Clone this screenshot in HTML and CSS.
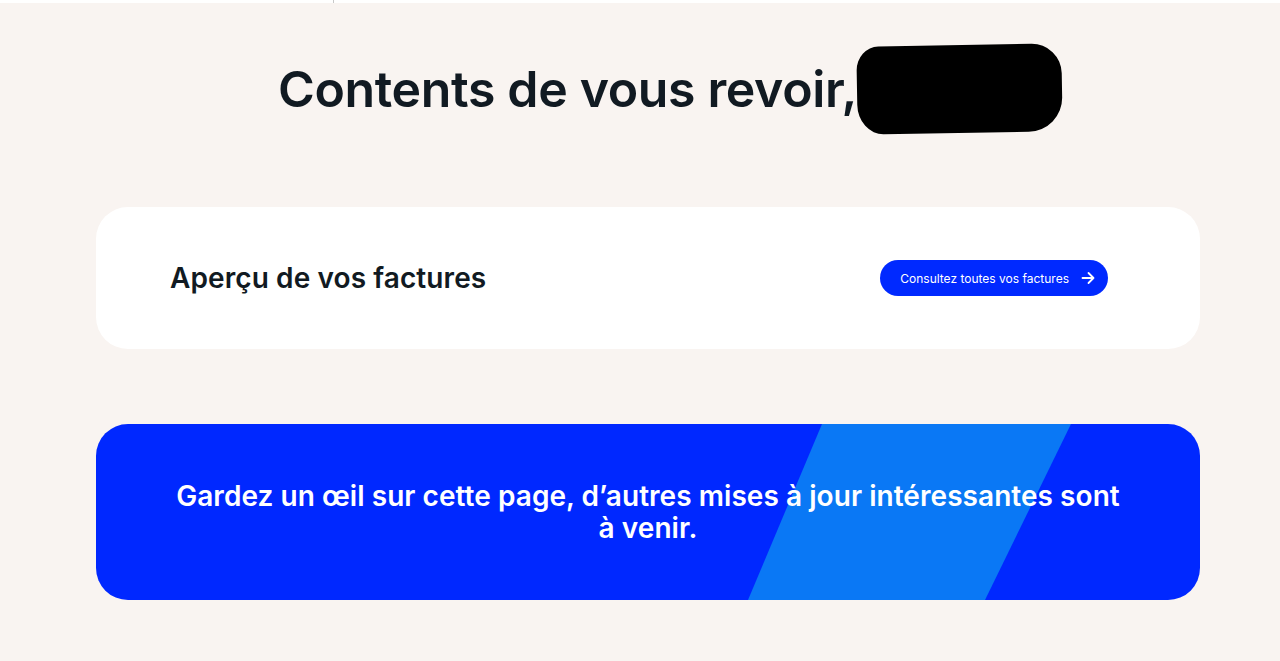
FILE: index.html
```html
<!DOCTYPE html>
<html lang="fr">
<head>
  <meta charset="UTF-8">
  <title>Accueil</title>
  <link rel="stylesheet" href="styles.css">
</head>
<body>

  <div class="barre-haut"><span class="trait"></span></div>

  <main class="page">
    <h1 class="bienvenue">
      <span>Contents de vous revoir,</span>
      <span class="masque"></span>
    </h1>

    <section class="carte factures">
      <h2>Aperçu de vos factures</h2>
      <a class="bouton" href="#">
        Consultez toutes vos factures
        <svg width="14" height="14" viewBox="0 0 14 14" fill="none" stroke="currentColor" stroke-width="1.8" stroke-linecap="round" stroke-linejoin="round">
          <path d="M1.5 7h11M7.5 2l5 5-5 5"/>
        </svg>
      </a>
    </section>

    <section class="carte annonce">
      <p>Gardez un œil sur cette page, d’autres mises à jour intéressantes sont à venir.</p>
    </section>
  </main>

</body>
</html>
```

FILE: styles.css
```css
body {
  margin: 0;
  background-color: #f9f4f1;
  font-family: Inter, "Noto Sans", sans-serif;
  color: #111a22;
}

.barre-haut {
  height: 3px;
  background: #fff;
  position: relative;
}

.trait {
  position: absolute;
  left: 333px;
  top: 0;
  width: 1px;
  height: 3px;
  background: #c8c8c8;
}

.page {
  padding: 0 80px 60px 96px;
}

.bienvenue {
  display: flex;
  justify-content: center;
  align-items: center;
  margin: 38px 0 0;
  padding-left: 44px;
  height: 96px;
  font-size: 50px;
  font-weight: 600;
  letter-spacing: -0.35px;
}

.masque {
  display: inline-block;
  width: 205px;
  height: 88px;
  background: #000;
  border-radius: 22px 30px 34px 26px / 24px 30px 34px 30px;
  margin-left: 0;
  transform: rotate(-1deg);
}

.carte {
  border-radius: 32px;
}

.factures {
  margin-top: 70px;
  height: 142px;
  background: #fff;
  display: flex;
  align-items: center;
  justify-content: space-between;
  padding: 0 92px 0 74px;
}

.factures h2 {
  margin: 0;
  font-size: 28px;
  font-weight: 600;
  letter-spacing: 0.1px;
}

.bouton {
  display: flex;
  align-items: center;
  gap: 12px;
  height: 36px;
  padding: 0 13px 0 20px;
  border-radius: 18px;
  background: #0029ff;
  color: #fff;
  font-size: 12px;
  text-decoration: none;
}

.annonce {
  margin-top: 75px;
  height: 176px;
  background: #0028ff;
  position: relative;
  overflow: hidden;
  display: flex;
  align-items: center;
  justify-content: center;
  padding: 0 74px;
}

.annonce::before {
  content: "";
  position: absolute;
  inset: 0;
  background: #0a78f5;
  clip-path: polygon(726px 0, 975px 0, 889px 100%, 652px 100%);
}

.annonce p {
  position: relative;
  max-width: 946px;
  margin: 0;
  color: #fff;
  text-align: center;
  font-size: 28px;
  font-weight: 600;
  line-height: 32px;
  letter-spacing: 0.05px;
}
```
